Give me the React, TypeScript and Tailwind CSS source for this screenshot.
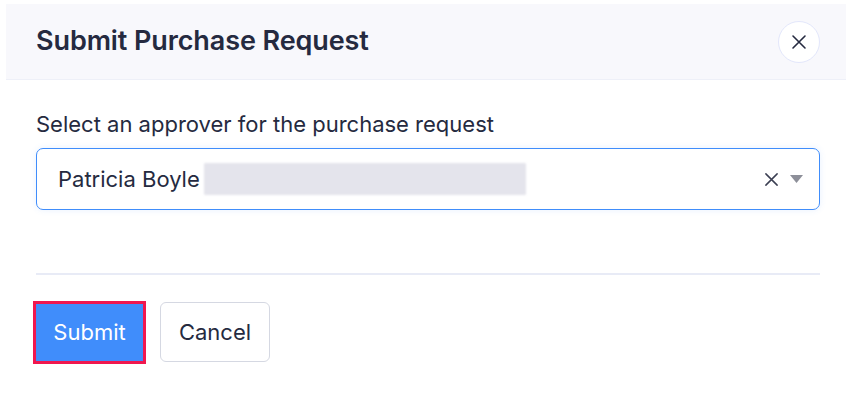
import React from "react";

export default function App() {
  return (
    <div className="w-[846px] h-[410px] bg-white pt-[4px] pl-[6px] overflow-hidden" style={{ fontFamily: "Inter, 'Noto Sans', sans-serif" }}>
      <div className="h-[76px] bg-[#f8f8fc] flex items-center justify-between pl-[30px] pr-[26px] border-b border-[#eef0f8]">
        <h1 className="text-[27px] font-semibold text-[#252a40] tracking-[-0.1px]">Submit Purchase Request</h1>
        <button className="w-[42px] h-[42px] rounded-full bg-white border border-[#e3e7fb] flex items-center justify-center text-[#252a40]">
          <svg width="16" height="16" viewBox="0 0 16 16" fill="none" stroke="currentColor" strokeWidth="1.6" strokeLinecap="round">
            <path d="M2 2L14 14M14 2L2 14" />
          </svg>
        </button>
      </div>
      <div className="pl-[30px] pr-[26px]">
        <div className="pt-[32px] text-[22px] text-[#252a40] leading-[25px]">Select an approver for the purchase request</div>
        <div className="mt-[11px] h-[62px] rounded-[7px] border-[1.5px] border-[#408dfb] flex items-center pl-[21px] pr-[16px] shadow-[0_0_6px_rgba(64,141,251,0.12)]">
          <span className="text-[22px] text-[#252a40]">Patricia Boyle</span>
          <span className="ml-[4px] h-[32px] w-[322px] bg-[#e4e4ec] blur-[1px] rounded-[1px]"></span>
          <div className="flex-1" />
          <svg width="15" height="15" viewBox="0 0 16 16" fill="none" stroke="#3b3f52" strokeWidth="1.6" strokeLinecap="round">
            <path d="M2 2L14 14M14 2L2 14" />
          </svg>
          <svg className="ml-[11px]" width="13" height="8" viewBox="0 0 13 8">
            <path d="M0 0H13L6.5 8Z" fill="#8d8f99" />
          </svg>
        </div>
        <div className="mt-[63px] h-[2px] bg-[#e8ebf6]" />
        <div className="mt-[26px] flex gap-[14px] -ml-[3px]">
          <button className="w-[113px] h-[63px] bg-[#408dfb] border-[3px] border-[#f0174f] text-white text-[22px] flex items-center justify-center">Submit</button>
          <button className="w-[110px] h-[60px] mt-[1px] bg-white border-[1.5px] border-[#d5d8e2] rounded-[6px] text-[#252a40] text-[22px] flex items-center justify-center">Cancel</button>
        </div>
      </div>
    </div>
  );
}
